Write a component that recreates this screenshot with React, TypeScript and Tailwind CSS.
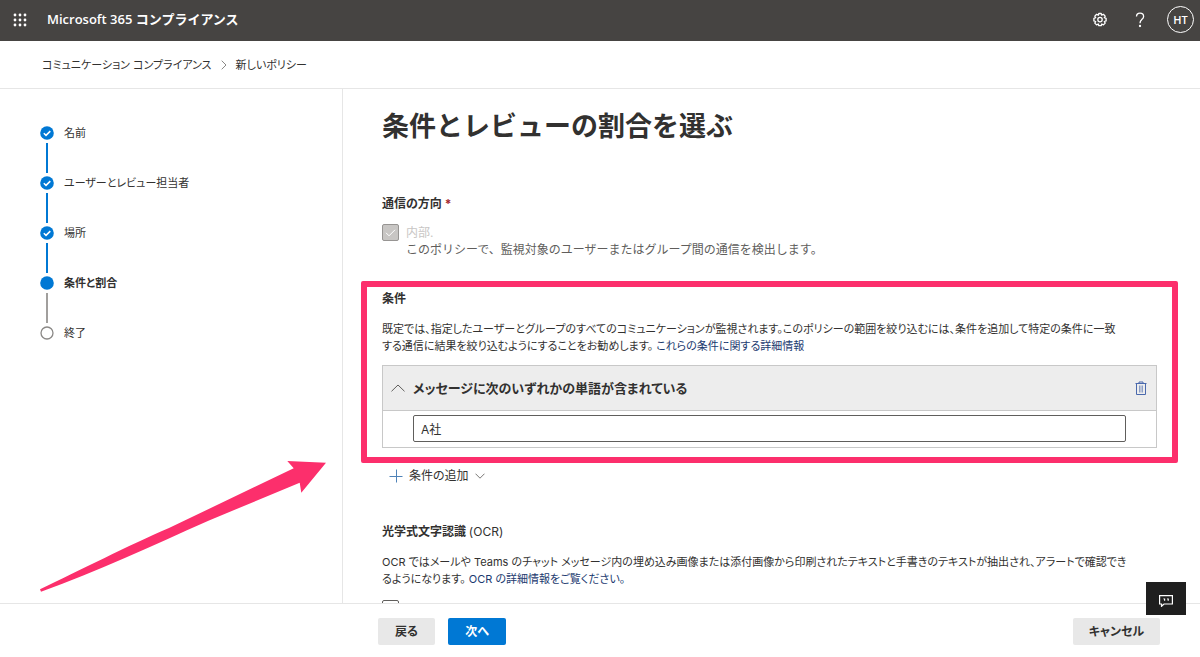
import React, { useState } from "react";

interface Step {
  label: string;
  state: "done" | "current" | "todo";
}

const steps: Step[] = [
  { label: "名前", state: "done" },
  { label: "ユーザーとレビュー担当者", state: "done" },
  { label: "場所", state: "done" },
  { label: "条件と割合", state: "current" },
  { label: "終了", state: "todo" },
];

function StepMarker({ state }: { state: Step["state"] }) {
  return (
    <svg width="14" height="14" viewBox="0 0 14 14" className="shrink-0">
      {state === "todo" ? (
        <circle cx="7" cy="7" r="6" fill="#fff" stroke="#8a8886" strokeWidth="1.3" />
      ) : (
        <circle cx="7" cy="7" r="6.8" fill="#0078d4" />
      )}
      {state === "done" && (
        <path d="M3.8 7.3 6 9.4l4.3-4.3" fill="none" stroke="#fff" strokeWidth="1.5" />
      )}
    </svg>
  );
}

function Header() {
  return (
    <header className="flex h-[41px] shrink-0 items-center bg-[#464442] pb-[2px] text-white">
      <button aria-label="アプリ起動ツール" className="ml-3 flex size-4 items-center justify-center">
        <svg width="14" height="14" viewBox="0 0 14 14" fill="#fff">
          {[2, 7, 12].map((y) =>
            [2, 7, 12].map((x) => <circle key={`${x}-${y}`} cx={x} cy={y} r="1.4" />)
          )}
        </svg>
      </button>
      <span className="ml-[19px] text-[13px] font-semibold font-['Open_Sans','Noto_Sans_CJK_JP',sans-serif] [font-feature-settings:normal]">
        Microsoft 365 コンプライアンス
      </span>
      <div className="ml-auto flex items-center">
        <button aria-label="設定" className="mr-6 flex size-4 items-center justify-center">
          <svg width="16" height="16" viewBox="0 0 16 16" fill="none" stroke="#fff" strokeWidth="1.3">
            <path
              d="M6.8 1.500h2.400l.5 1.700 1.700-.9 1.800 1.800-.9 1.600 1.800.600v2.600l-1.800.600.9 1.600-1.800 1.800-1.700-.9-.5 1.700H6.800l-.5-1.700-1.700.9-1.800-1.800.9-1.600-1.800-.600V6.300l1.800-.600-.9-1.600 1.800-1.800 1.700.9z"
              strokeLinejoin="round"
            />
            <circle cx="8" cy="7.600" r="2.2" />
          </svg>
        </button>
        <button aria-label="ヘルプ" className="mr-[19px] flex size-4 items-center justify-center">
          <svg width="12" height="16" viewBox="0 0 12 16" fill="none" stroke="#fff" strokeWidth="1.3">
            <path d="M2.500 4.600C2.500 2.500 4 1.200 6 1.200s3.600 1.200 3.600 3.200C9.600 7.300 6 7.400 6 11.300" />
            <circle cx="6" cy="14" r="0.500" fill="#fff" />
          </svg>
        </button>
        <button className="mr-[6px] flex size-[27px] items-center justify-center rounded-full border border-white text-[11px] font-semibold font-['Open_Sans',sans-serif]">
          HT
        </button>
      </div>
    </header>
  );
}

function Sidebar() {
  return (
    <aside className="relative w-[343px] shrink-0 border-r border-[#e6e6e6] pl-10 pt-9">
      <ol>
        {steps.map((s, i) => (
          <li key={s.label}>
            <div className={`flex h-4 items-center gap-[10px] text-[11px] ${s.state === "current" ? "font-bold" : ""}`}>
              <StepMarker state={s.state} />
              {s.label}
            </div>
            {i < steps.length - 1 && (
              <div className="flex h-[34px] w-[14px] justify-center py-[2px]">
                <div className={s.state === "done" ? "w-[2px] bg-[#0078d4]" : "w-[2px] bg-[#a19f9d]"} />
              </div>
            )}
          </li>
        ))}
      </ol>
      <svg width="288" height="134" viewBox="0 0 288 134" className="absolute left-[39px] top-[370px]">
        <path
          d="M1 130.200C40 112 90 86 130 69L254.700 9.300 248.300 2 287 3.700 262.300 33.700 260.700 23.700 170 61.500C110 88 60 112 2 132.800Z"
          fill="#fc2f6c"
        />
      </svg>
    </aside>
  );
}

export default function App() {
  const [open, setOpen] = useState(true);
  const [words, setWords] = useState("A社");

  return (
    <div className="flex h-screen flex-col overflow-hidden bg-white text-[12px] leading-[17px] text-[#323130] font-['Inter','Noto_Sans_CJK_JP',sans-serif] [font-feature-settings:'palt']">
      <Header />

      <nav className="flex h-12 shrink-0 items-center gap-[9px] border-b border-[#e6e6e6] pl-[42px] pt-px text-[11px]">
        <a href="#">コミュニケーション コンプライアンス</a>
        <svg width="6" height="10" viewBox="0 0 6 10" fill="none" stroke="#8a8886">
          <path d="M.7.7 5 5 .7 9.300" />
        </svg>
        <span>新しいポリシー</span>
      </nav>

      <div className="flex min-h-0 flex-1">
        <Sidebar />

        <main className="min-w-0 flex-1 overflow-hidden pl-[39px] pr-[43px] pt-[18px]">
          <h1 className="text-[27px] font-bold leading-10 [font-feature-settings:normal]">
            条件とレビューの割合を選ぶ
          </h1>

          {/* Direction */}
          <section className="mt-12">
            <h2 className="font-bold">
              通信の方向 <span className="text-[#a4262c]">*</span>
            </h2>
            <div className="mt-3 flex gap-[7px]">
              <span className="relative size-[17px] shrink-0">
                <input
                  id="internal"
                  type="checkbox"
                  checked
                  disabled
                  readOnly
                  className="block size-[17px] appearance-none rounded-xs border border-[#979593] bg-[#c8c6c4]"
                />
                <svg width="17" height="17" viewBox="0 0 17 17" className="absolute inset-0">
                  <path d="m4 8.800 3 3 6-6" fill="none" stroke="#fff" />
                </svg>
              </span>
              <div>
                <label htmlFor="internal" className="block text-[#c8c6c4]">
                  内部.
                </label>
                <p className="text-[#605e5c] [font-feature-settings:normal]">
                  このポリシーで、監視対象のユーザーまたはグループ間の通信を検出します。
                </p>
              </div>
            </div>
          </section>

          {/* Conditions */}
          <section className="relative mt-8">
            <h2 className="font-bold">条件</h2>
            <p className="mt-[14px] text-[11px]">
              既定では、指定したユーザーとグループのすべてのコミュニケーションが監視されます。このポリシーの範囲を絞り込むには、条件を追加して特定の条件に一致
              <br />
              する通信に結果を絞り込むようにすることをお勧めします。{" "}
              <a href="#" className="text-[#1b3a6f]">これらの条件に関する詳細情報</a>
            </p>
            <div className="mt-[10px] border border-[#c8c8c8]">
              <div className="flex h-[45px] items-center border-b border-[#c8c8c8] bg-[#ededed] pl-2 pr-[9px]">
                <button onClick={() => setOpen(!open)} className="flex items-center gap-2 text-[13px] font-bold">
                  <svg width="14" height="8" viewBox="0 0 14 8" fill="none" stroke="#605e5c">
                    <path d="M.5 7.300 7 1l6.500 6.300" />
                  </svg>
                  メッセージに次のいずれかの単語が含まれている
                </button>
                <button aria-label="削除" className="ml-auto">
                  <svg width="12" height="14" viewBox="0 0 12 14" fill="none" stroke="#4a69ad">
                    <path d="M.5 2.500h11M4 2.500V1h4v1.500M1.500 2.500v11h9v-11" />
                    <path d="M4.500 4.500v7M6 4.500v7M7.500 4.500v7" strokeWidth=".6" />
                  </svg>
                </button>
              </div>
              {open && (
                <div className="pb-[5px] pl-[30px] pr-[30px] pt-1">
                  <input
                    aria-label="単語"
                    value={words}
                    onChange={(e) => setWords(e.target.value)}
                    className="block h-[27px] w-full rounded-xs border border-[#605e5c] px-[7px] outline-none"
                  />
                </div>
              )}
            </div>
            <div className="pointer-events-none absolute -bottom-[15px] -left-[21px] -right-[21px] -top-[9px] rounded-xs border-6 border-[#fc2f6c]" />
          </section>

          <button className="mt-[19px] flex items-center gap-[6px] pl-[7px]">
            <svg width="14" height="14" viewBox="0 0 14 14" fill="none" stroke="#4f83b8">
              <path d="M7.500.5v13M.5 7.500h13" />
            </svg>
            条件の追加
            <svg width="10" height="6" viewBox="0 0 10 6" fill="none" stroke="#797775">
              <path d="M.5.7 5 5.200 9.500.7" />
            </svg>
          </button>

          {/* OCR */}
          <section className="mt-[39px]">
            <h2 className="font-bold">
              光学式文字認識 <span className="font-normal">(OCR)</span>
            </h2>
            <p className="mt-[14px] text-[11px]">
              OCR ではメールや Teams のチャット メッセージ内の埋め込み画像または添付画像から印刷されたテキストと手書きのテキストが抽出され、アラートで確認でき
              <br />
              るようになります。{" "}
              <a href="#" className="text-[#1b3a6f]">OCR の詳細情報をご覧ください。</a>
            </p>
            <input
              type="checkbox"
              aria-label="OCR"
              className="mt-3 block size-[17px] appearance-none rounded-xs border border-[#605e5c]"
            />
          </section>
        </main>
      </div>

      <footer className="relative flex h-[54px] shrink-0 items-center gap-[13px] border-t border-[#e6e6e6] pl-[378px] pr-10 pt-px font-bold">
        <button className="h-[27px] w-[57px] rounded-xs bg-[#e8e8e8]">戻る</button>
        <button className="h-[27px] w-[58px] rounded-xs bg-[#0078d4] text-white">次へ</button>
        <button className="ml-auto h-[27px] w-[87px] rounded-xs bg-[#e8e8e8]">キャンセル</button>
        <button
          aria-label="フィードバック"
          className="absolute -top-[22px] right-[14px] flex h-[33px] w-10 items-center justify-center bg-[#1f1f1f]"
        >
          <svg width="14" height="12" viewBox="0 0 14 12" fill="none" stroke="#fff" strokeWidth="1.200" className="mt-1">
            <path d="M.6.6h12.800v8.400H5L2.500 11.300V9H.6z" />
            <path d="M4.200 3.500h2v2.300h-1.200v-1zM7.800 3.500h2v2.300H8.600v-1z" fill="#fff" stroke="none" />
          </svg>
        </button>
      </footer>
    </div>
  );
}
